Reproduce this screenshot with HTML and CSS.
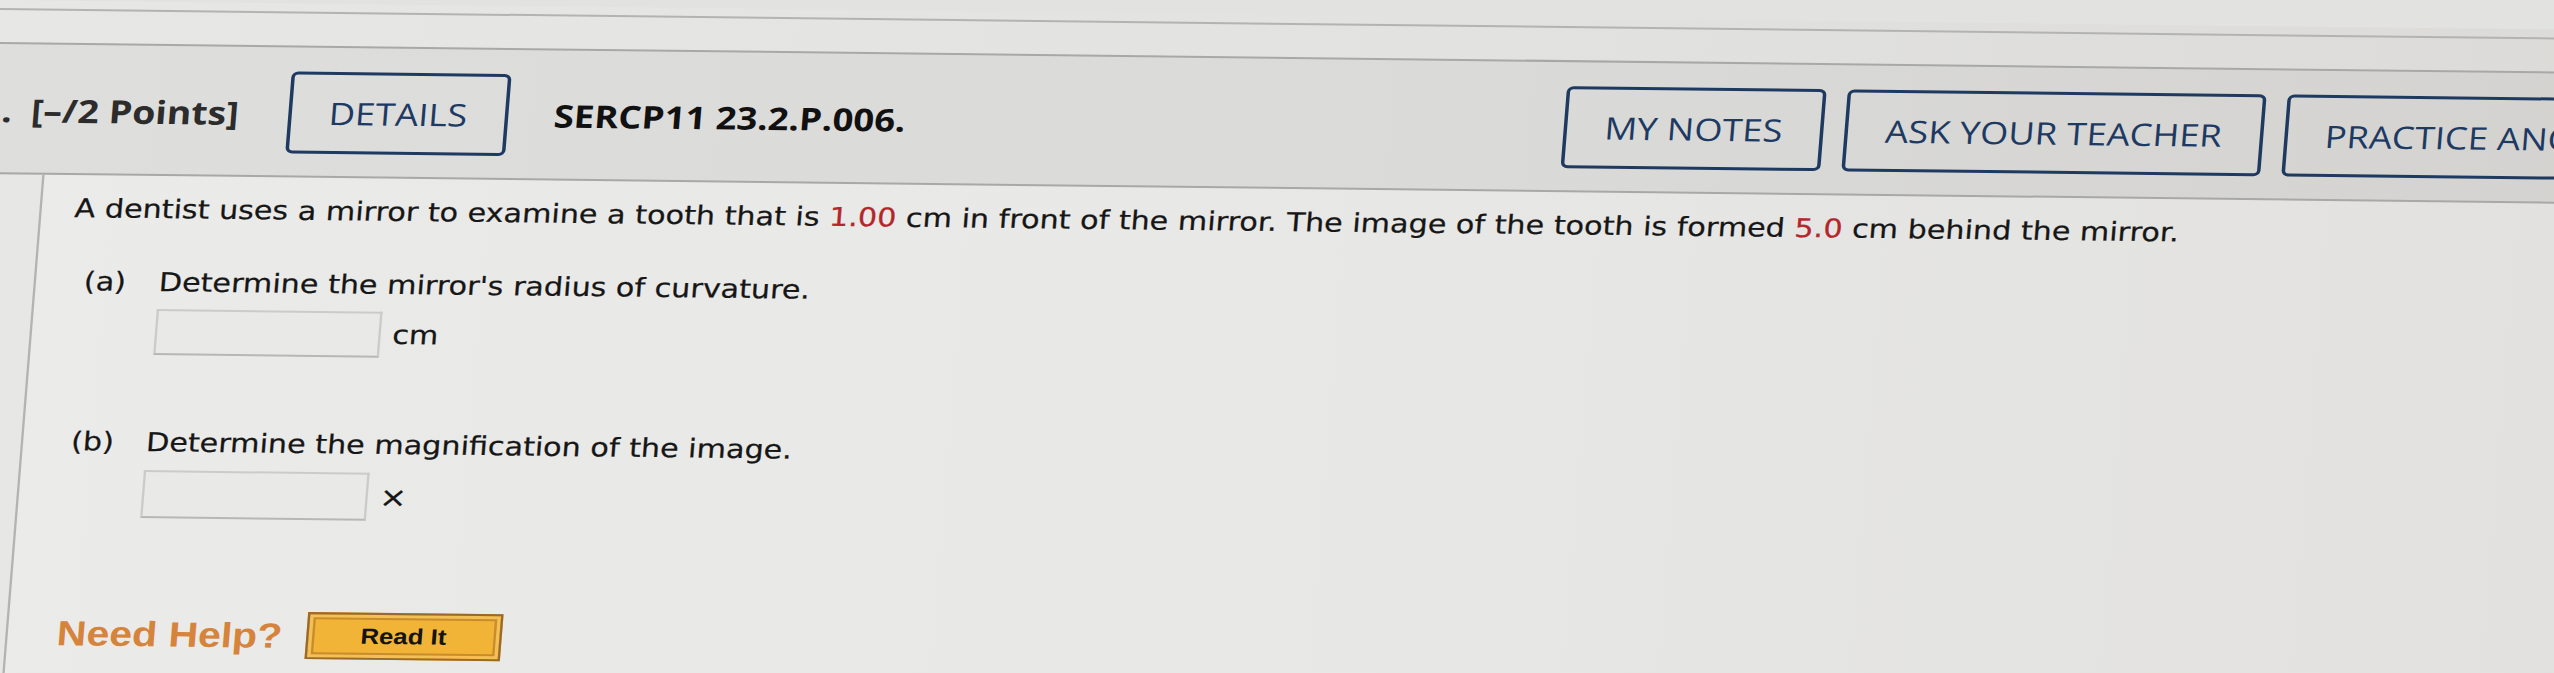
FILE: index.html
```html
<!DOCTYPE html>
<html lang="en">
<head>
<meta charset="utf-8">
<title>SERCP11 23.2.P.006.</title>
<link rel="stylesheet" href="styles.css">
</head>
<body>
<div class="page">
  <div class="prev-edge"></div>
  <div class="prev-band"></div>
  <section class="question">
    <div class="qhead">
      <div class="qhead-lead">
        <span class="qnum">.</span>
        <span class="points">[–/2 Points]</span>
        <button class="btn btn-details" type="button">DETAILS</button>
        <span class="qid">SERCP11 23.2.P.006.</span>
      </div>
      <div class="qhead-tools">
        <button class="btn" type="button">MY NOTES</button>
        <button class="btn" type="button">ASK YOUR TEACHER</button>
        <button class="btn" type="button">PRACTICE ANOTHER</button>
      </div>
    </div>
    <div class="qbody">
      <p class="stem">A dentist uses a mirror to examine a tooth that is <span class="given">1.00</span> cm in front of the mirror. The image of the tooth is formed <span class="given">5.0</span> cm behind the mirror.</p>
      <div class="part part-a">
        <div class="part-q"><span class="part-label">(a)</span><span class="part-text">Determine the mirror's radius of curvature.</span></div>
        <div class="answer"><input class="answer-box" type="text" aria-label="radius of curvature"><span class="unit">cm</span></div>
      </div>
      <div class="part part-b">
        <div class="part-q"><span class="part-label">(b)</span><span class="part-text">Determine the magnification of the image.</span></div>
        <div class="answer"><input class="answer-box answer-box-b" type="text" aria-label="magnification"><span class="unit unit-x">×</span></div>
      </div>
      <div class="help">
        <span class="need-help">Need Help?</span>
        <button class="read-it" type="button">Read It</button>
      </div>
    </div>
  </section>
</div>
</body>
</html>
```

FILE: styles.css
```css
html, body {
  margin: 0;
  padding: 0;
  overflow: hidden;
}

body {
  width: 2554px;
  height: 673px;
  background: #e2e2e0;
}

/* the reference is a photo of the screen: one camera transform for the whole page */
.page {
  width: 2320px;
  height: 780px;
  transform-origin: 0 0;
  transform: matrix(1.17, 0.0135, -0.08, 1, 0, 0);
  background: linear-gradient(90deg, #e7e7e5 0%, #e2e2e0 55%, #dbdad7 100%);
  font-family: "DejaVu Sans", Verdana, sans-serif;
  color: #161616;
}

.prev-edge {
  height: 8px;
  border-bottom: 2px solid #b3b3b1;
}

.prev-band {
  height: 32px;
  border-bottom: 2px solid #a8a8a6;
}

/* ---------- question header ---------- */
.qhead {
  height: 126px;
  padding-top: 2px;
  display: flex;
  align-items: center;
  border-bottom: 2px solid #a8a8a6;
  background: rgba(0, 0, 0, 0.035);
  font-family: "Open Sans", "DejaVu Sans", sans-serif;
}

.qhead-lead {
  width: 1344px;
  display: flex;
  align-items: center;
  flex-shrink: 0;
}

.qnum {
  margin-left: 9px;
  font-size: 32px;
  font-weight: 700;
  color: #2c2c2c;
}

.points {
  margin-left: 16px;
  font-size: 32px;
  font-weight: 700;
  color: #2c2c2c;
}

.qid {
  margin-left: 39px;
  font-size: 31.2px;
  font-weight: 700;
  color: #111;
}

.btn {
  height: 82px;
  padding: 0 32px;
  border: 3px solid #1f3a60;
  border-radius: 6px;
  background: transparent;
  font-family: "Open Sans", "DejaVu Sans", sans-serif;
  font-size: 31px;
  font-weight: 400;
  color: #1d3a63;
  white-space: nowrap;
  flex-shrink: 0;
}

.btn-details {
  margin-left: 42px;
}

.qhead-tools {
  display: flex;
  align-items: center;
  gap: 18px;
  flex-shrink: 0;
}

/* ---------- question body ---------- */
.qbody {
  margin-left: 48px;
  border-left: 2px solid #b3b3b1;
  padding: 15px 0 60px 28px;
  background: rgba(255, 255, 255, 0.18);
  min-height: 560px;
  -webkit-text-stroke: 0.25px currentColor;
}

.stem {
  margin: 0;
  font-size: 25.8px;
  line-height: 36px;
  white-space: nowrap;
}

.given {
  color: #b3262b;
}

.part-q {
  display: flex;
  padding-left: 13px;
  font-size: 25.8px;
  line-height: 36px;
  white-space: nowrap;
}

.part-a .part-q {
  margin-top: 37px;
}

.part-b .part-q {
  margin-top: 69px;
}

.part-label {
  width: 64px;
  flex-shrink: 0;
}

.answer {
  display: flex;
  align-items: center;
  margin-left: 77px;
}

.part-a .answer {
  margin-top: 9px;
}

.part-b .answer {
  margin-top: 10px;
}

.answer-box {
  width: 193px;
  height: 46px;
  box-sizing: border-box;
  margin: 0;
  border: 2px solid #cbcbc9;
  border-bottom-color: #b7b7b5;
  background: #e9e9e7;
}

.answer-box-b {
  height: 48px;
}

.unit {
  margin-left: 10px;
  font-size: 25.8px;
}

.unit-x {
  font-size: 28px;
}

/* ---------- help ---------- */
.help {
  display: flex;
  align-items: center;
  margin-top: 92px;
  margin-left: 14px;
  -webkit-text-stroke: 0;
}

.need-help {
  font-family: "Liberation Sans", Arial, sans-serif;
  font-size: 35px;
  font-weight: 700;
  color: #d6843c;
}

.read-it {
  margin-left: 20px;
  width: 167px;
  height: 47px;
  border: 2px solid #9a6a2c;
  background: #f1b437;
  box-shadow: inset 0 0 0 3px #f3c055, inset 0 0 0 5px #c98b2c;
  font-family: "Liberation Sans", Arial, sans-serif;
  font-size: 22px;
  font-weight: 700;
  color: #141414;
}
```
